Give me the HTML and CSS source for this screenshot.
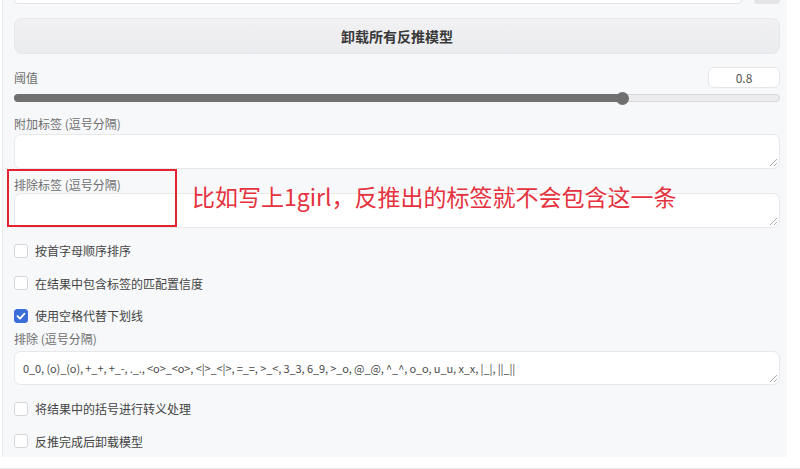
FILE: index.html
```html
<!DOCTYPE html>
<html lang="zh">
<head>
<meta charset="utf-8">
<link rel="stylesheet" href="styles.css">
</head>
<body>
<div class="page">
  <div class="panel">
    <div class="topbar">
      <div class="topbox"></div>
      <div class="topbtn"></div>
    </div>
    <button class="unload">卸载所有反推模型</button>
    <div class="slider-block">
      <div class="slider-head">
        <span class="label">阈值</span>
        <div class="num">0.8</div>
      </div>
      <div class="track"><div class="fill" style="width:79.5%"></div><div class="thumb" style="left:79.5%"></div></div>
    </div>
    <div class="field f1">
      <span class="label">附加标签 (逗号分隔)</span>
      <div class="area"><span class="grip"></span></div>
    </div>
    <div class="field f2">
      <span class="label">排除标签 (逗号分隔)</span>
      <div class="area"><span class="grip"></span></div>
    </div>
    <div class="checks c1">
      <label class="check"><span class="box"></span>按首字母顺序排序</label>
      <label class="check"><span class="box"></span>在结果中包含标签的匹配置信度</label>
      <label class="check"><span class="box on"><svg viewBox="0 0 14 14" width="14" height="14"><path d="M3.5 7.2 L6 9.6 L10.5 4.6" fill="none" stroke="#fff" stroke-width="1.8" stroke-linecap="round" stroke-linejoin="round"/></svg></span>使用空格代替下划线</label>
    </div>
    <div class="field f3">
      <span class="label">排除 (逗号分隔)</span>
      <div class="area txt">0_0, (o)_(o), +_+, +_-, ._., &lt;o&gt;_&lt;o&gt;, &lt;|&gt;_&lt;|&gt;, =_=, &gt;_&lt;, 3_3, 6_9, &gt;_o, @_@, ^_^, o_o, u_u, x_x, |_|, ||_||<span class="grip"></span></div>
    </div>
    <div class="checks c2">
      <label class="check"><span class="box"></span>将结果中的括号进行转义处理</label>
      <label class="check"><span class="box"></span>反推完成后卸载模型</label>
    </div>
    <div class="redbox"></div>
    <div class="note">比如写上1girl，反推出的标签就不会包含这一条</div>
  </div>
</div>
</body>
</html>
```
FILE: styles.css
```css
* { box-sizing: border-box; }
html, body { margin: 0; padding: 0; background: #fff; }
body {
  width: 800px; height: 469px; overflow: hidden;
  font-family: "Noto Sans CJK SC", "Noto Sans", sans-serif;
  color: #444;
}
.page {
  height: 469px;
  padding: 0 13px 11px 2px;
  border-bottom: 1px solid #e6e6e6;
}
.panel {
  position: relative;
  height: 457px;
  background: #f7f8fa;
  border-left: 1px solid #ececec;
  padding: 0 7px 0 11px;
  display: flex;
  flex-direction: column;
}
.topbar { display: flex; gap: 12px; height: 4px; overflow: visible; }
.topbox {
  flex: 1; height: 4px; background: #fff;
  border: 1px solid #e4e4e7; border-top: none;
  border-radius: 0 0 8px 8px;
}
.topbtn { width: 26px; height: 4px; background: #e4e4e7; border-radius: 0 0 8px 8px; }
.unload {
  margin-top: 14px;
  height: 36px;
  border: 1px solid #e7e8eb;
  border-radius: 8px;
  background: linear-gradient(#f1f1f3, #ebecef);
  font-family: inherit;
  font-size: 14px;
  font-weight: 700;
  color: #3a3a3a;
}
.slider-block { margin-top: 13px; }
.slider-head { display: flex; justify-content: space-between; align-items: center; height: 21px; }
.label { font-size: 12px; color: #6e6e6e; line-height: 16px; }
.num {
  width: 72px; height: 21px; background: #fff;
  border: 1px solid #e6e6e8; border-radius: 6px;
  font-size: 12px; color: #555; text-align: center; line-height: 19px;
}
.track {
  position: relative; margin-top: 6px; height: 8px;
  background: #ececee; border: 1px solid #d8d8da; border-radius: 4px;
}
.fill { position: absolute; left: -1px; top: -1px; bottom: -1px; background: #707070; border-radius: 4px; }
.thumb {
  position: absolute; top: 50%; width: 13px; height: 13px;
  margin: -6.5px 0 0 -6.5px; border-radius: 50%; background: #6f6f6f;
}
.field { display: flex; flex-direction: column; }
.field .label { height: 16px; }
.f1 { margin-top: 14px; }
.f2 { margin-top: 8px; }
.f3 { margin-top: 8px; }
.area {
  position: relative; margin-top: 2px; height: 35px;
  background: #fff; border: 1px solid #e8e8ea; border-radius: 7px;
}
.f2 .area { margin-top: 0px; }
.f3 .area { margin-top: 4px; height: 34px; }
.txt { font-size: 11px; color: #4a4a4a; padding: 7px 8px; line-height: 18px; white-space: nowrap; letter-spacing: -0.1px; }
.grip {
  position: absolute; right: 2px; bottom: 2px; width: 7px; height: 7px;
  background: linear-gradient(135deg, transparent 45%, #aaa 45%, #aaa 55%, transparent 55%, transparent 75%, #aaa 75%, #aaa 85%, transparent 85%);
}
.checks { display: flex; flex-direction: column; gap: 17.5px; }
.c1 { margin-top: 15px; }
.c2 { margin-top: 16px; }
.check { display: flex; align-items: center; gap: 7px; font-size: 12px; color: #444; height: 15px; }
.box {
  width: 14px; height: 14px; background: #fff;
  border: 1px solid #d6d6d9; border-radius: 3px; display: flex;
}
.box.on { background: #3b6ed8; border-color: #3b6ed8; }
.box.on svg { margin: -1px; }
.redbox {
  position: absolute; left: 4px; top: 169px; width: 170px; height: 58px;
  border: 2px solid #e3242f;
}
.note {
  position: absolute; left: 189px; top: 181px;
  font-size: 23px; line-height: 30px; color: #e5323e; white-space: nowrap;
}
```
